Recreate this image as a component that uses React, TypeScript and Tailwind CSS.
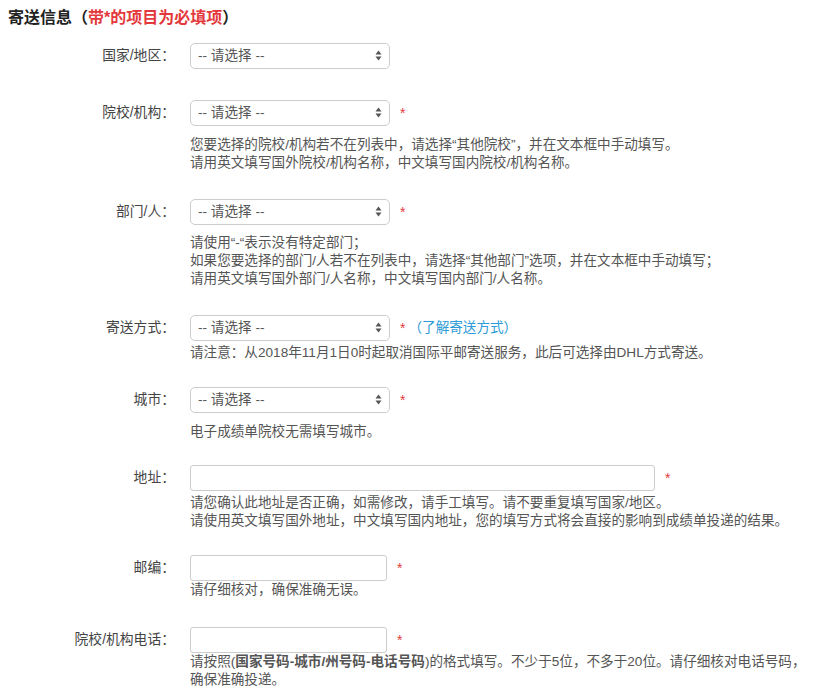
const font = { fontFamily: '"Liberation Sans", "Noto Sans CJK SC", sans-serif' };

function Arrows() {
  return (
    <svg width="7" height="11" viewBox="0 0 7 11" className="pointer-events-none absolute right-[8px] top-[7px]">
      <path d="M3.5 0.5 L6.5 4.5 H0.5 Z" fill="#555" />
      <path d="M3.5 10.5 L6.5 6.5 H0.5 Z" fill="#555" />
    </svg>
  );
}

function Select() {
  return (
    <div className="relative h-[26px] w-[200px]">
      <select
        className="h-full w-full appearance-none rounded-[5px] border border-[#ccc] bg-white pl-[7px] text-[13.6px] text-[#555] outline-none"
        style={font}
        defaultValue=""
      >
        <option value="">-- 请选择 --</option>
      </select>
      <Arrows />
    </div>
  );
}

function Input({ width }: { width: string }) {
  return (
    <input
      className={`h-[26px] ${width} rounded-[3px] border border-[#ccc] bg-white px-2 text-[13.6px] outline-none`}
      style={font}
    />
  );
}

function Star() {
  return <span className="ml-[10px] text-[14px] leading-[26px] text-[#e4393c]">*</span>;
}

function Row({
  label,
  field,
  help,
  mt,
  helpMt,
}: {
  label: string;
  field: React.ReactNode;
  help?: React.ReactNode;
  mt: string;
  helpMt?: string;
}) {
  return (
    <div className={`flex items-start ${mt}`}>
      <div className="w-[167px] shrink-0 text-right text-[13.8px] leading-[26px] text-[#444]">{label}：</div>
      <div className="ml-[15px] flex flex-col">
        <div className="flex items-start">{field}</div>
        {help && (
          <div className={`${helpMt} whitespace-nowrap text-[13.6px] leading-[18px] text-[#555]`}>{help}</div>
        )}
      </div>
    </div>
  );
}

export default function App() {
  return (
    <div className="min-h-[700px] w-[832px] bg-white px-2 pt-2" style={font}>
      <h2 className="text-[16px] font-bold leading-[20px] text-[#222]">
        寄送信息（<span className="text-[#e4393c]">带*的项目为必填项</span>）
      </h2>

      <Row label="国家/地区" mt="mt-[15px]" field={<Select />} />

      <Row
        label="院校/机构"
        mt="mt-[31px]"
        helpMt="mt-[10px]"
        field={
          <>
            <Select />
            <Star />
          </>
        }
        help={
          <>
            您要选择的院校/机构若不在列表中，请选择“其他院校”，并在文本框中手动填写。
            <br />
            请用英文填写国外院校/机构名称，中文填写国内院校/机构名称。
          </>
        }
      />

      <Row
        label="部门/人"
        mt="mt-[27px]"
        helpMt="mt-[9px]"
        field={
          <>
            <Select />
            <Star />
          </>
        }
        help={
          <>
            请使用“-“表示没有特定部门；
            <br />
            如果您要选择的部门/人若不在列表中，请选择“其他部门”选项，并在文本框中手动填写；
            <br />
            请用英文填写国外部门/人名称，中文填写国内部门/人名称。
          </>
        }
      />

      <Row
        label="寄送方式"
        mt="mt-[27px]"
        helpMt="mt-[3px]"
        field={
          <>
            <Select />
            <Star />
            <a className="ml-[3px] text-[13.6px] leading-[26px] text-[#2e9bd6]" href="#">
              （了解寄送方式）
            </a>
          </>
        }
        help={<>请注意：从2018年11月1日0时起取消国际平邮寄送服务，此后可选择由DHL方式寄送。</>}
      />

      <Row
        label="城市"
        mt="mt-[25px]"
        helpMt="mt-[10px]"
        field={
          <>
            <Select />
            <Star />
          </>
        }
        help={<>电子成绩单院校无需填写城市。</>}
      />

      <Row
        label="地址"
        mt="mt-[24px]"
        helpMt="mt-[3px]"
        field={
          <>
            <Input width="w-[465px]" />
            <Star />
          </>
        }
        help={
          <>
            请您确认此地址是否正确，如需修改，请手工填写。请不要重复填写国家/地区。
            <br />
            请使用英文填写国外地址，中文填写国内地址，您的填写方式将会直接的影响到成绩单投递的结果。
          </>
        }
      />

      <Row
        label="邮编"
        mt="mt-[25px]"
        helpMt="mt-0"
        field={
          <>
            <Input width="w-[197px]" />
            <Star />
          </>
        }
        help={<>请仔细核对，确保准确无误。</>}
      />

      <Row
        label="院校/机构电话"
        mt="mt-[28px]"
        helpMt="mt-0"
        field={
          <>
            <Input width="w-[197px]" />
            <Star />
          </>
        }
        help={
          <>
            请按照(<b>国家号码-城市/州号码-电话号码</b>)的格式填写。不少于5位，不多于20位。请仔细核对电话号码，
            <br />
            确保准确投递。
          </>
        }
      />
    </div>
  );
}
